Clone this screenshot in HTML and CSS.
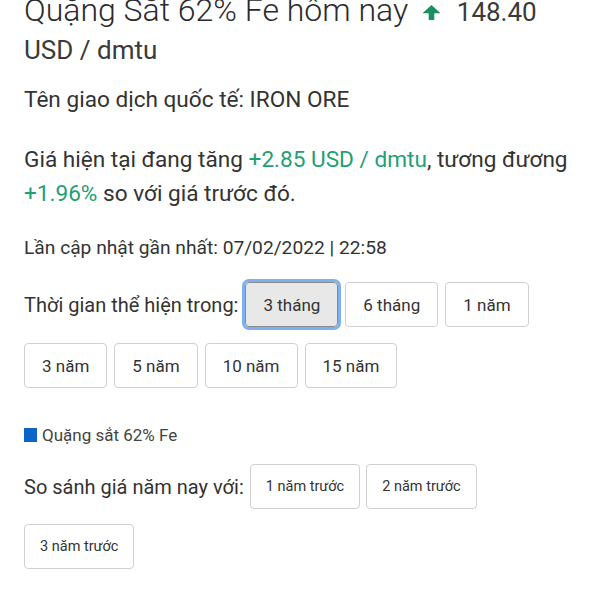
FILE: index.html
```html
<!DOCTYPE html>
<html lang="vi">
<head>
<meta charset="utf-8">
<link rel="stylesheet" href="styles.css">
</head>
<body>
<main class="page">
  <h1 class="title">Quặng Sắt 62% Fe hôm nay <span class="arrow"><svg width="19" height="15" viewBox="0 0 19 15"><path d="M9.5 0 L18.5 8.2 L12.3 8.2 L12.3 15 L6.7 15 L6.7 8.2 L0.5 8.2 Z" fill="#1b8f62"/></svg></span> <span class="price">148.40 USD / dmtu</span></h1>

  <p class="name">Tên giao dịch quốc tế: IRON ORE</p>

  <p class="desc">Giá hiện tại đang tăng <span class="up">+2.85 USD / dmtu</span>, tương đương <span class="up">+1.96%</span> so với giá trước đó.</p>

  <p class="updated">Lần cập nhật gần nhất: 07/02/2022 | 22:58</p>

  <div class="group range">
    <span class="label">Thời gian thể hiện trong:</span>
    <button class="btn active">3 tháng</button>
    <button class="btn">6 tháng</button>
    <button class="btn">1 năm</button>
    <button class="btn">3 năm</button>
    <button class="btn">5 năm</button>
    <button class="btn">10 năm</button>
    <button class="btn">15 năm</button>
  </div>

  <div class="legend"><span class="swatch"></span>Quặng sắt 62% Fe</div>

  <div class="group compare">
    <span class="label">So sánh giá năm nay với:</span>
    <button class="btn small">1 năm trước</button>
    <button class="btn small">2 năm trước</button>
    <button class="btn small">3 năm trước</button>
  </div>
</main>
</body>
</html>
```

FILE: styles.css
```css
* { box-sizing: border-box; }
html, body { margin: 0; padding: 0; background: #fff; }
body {
  font-family: Roboto, "Noto Sans", sans-serif;
  color: #333;
  -webkit-font-smoothing: antialiased;
}
.page {
  width: 600px;
  padding: 0 24px;
  margin-top: -9px;
}
.title {
  margin: 0;
  font-size: 32px;
  font-weight: 300;
  line-height: 36px;
  color: #2b2b2b;
}
.arrow { display: inline-block; vertical-align: 1px; margin: 0 8px 0 6px; }
.price { font-size: 26px; font-weight: 400; color: #3a3a3a; }
.name {
  margin: 17px 0 0;
  font-size: 22.6px;
  line-height: 30px;
}
.desc {
  margin: 28px 0 0;
  font-size: 22.6px;
  line-height: 34px;
}
.up { color: #23a073; }
.updated {
  margin: 24px 0 0;
  font-size: 19.2px;
  line-height: 26px;
}
.group {
  display: flex;
  flex-wrap: wrap;
  align-items: center;
  column-gap: 7px;
  row-gap: 16px;
}
.range { margin-top: 21px; }
.label { font-size: 20px; }
.btn {
  font-family: inherit;
  font-size: 17px;
  color: #333;
  background: #fff;
  border: 1.5px solid #d0d0d0;
  border-radius: 4px;
  height: 45px;
  padding: 0 17px;
  cursor: pointer;
}
.btn.active {
  background: #e8e8e8;
  border-color: #8a8a8a;
  outline: 3px solid #7fb0ee;
  outline-offset: 0;
}
.legend {
  margin-top: 37px;
  display: flex;
  align-items: center;
  font-size: 17px;
  color: #444;
}
.swatch {
  width: 13px;
  height: 14px;
  background: #0d64c8;
  margin-right: 5px;
}
.compare { margin-top: 19px; row-gap: 15px; column-gap: 6px; }
.btn.small { font-size: 14.5px; padding: 0 15px; }
```
